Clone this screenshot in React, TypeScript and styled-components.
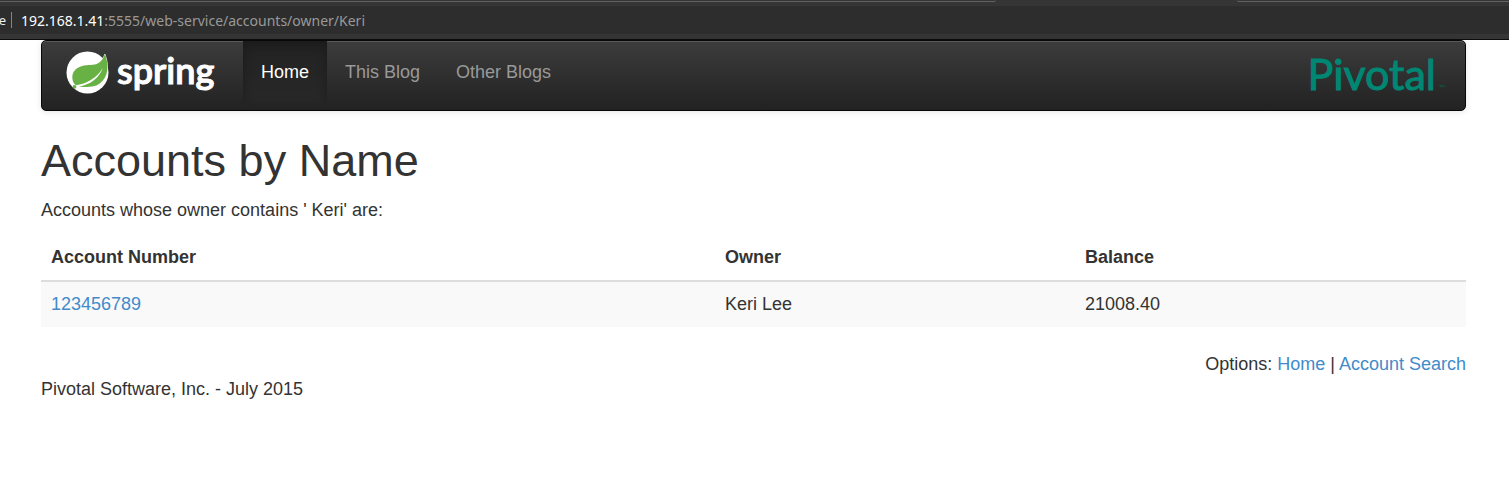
import React from "react";
import styled, { createGlobalStyle } from "styled-components";

const GlobalStyle = createGlobalStyle`
  *, *::before, *::after { box-sizing: border-box; }
  body {
    margin: 0;
    background: #fff;
    color: #333;
    font-family: "Liberation Sans", Arial, sans-serif;
    font-size: 18px;
    line-height: 25px;
  }
`;

const BrowserBar = styled.div`
  height: 40px;
  background: #353535;
  border-bottom: 1px solid #0c0c0c;
`;

const TabStrip = styled.div`
  display: grid;
  grid-template-columns: 66% 1fr 18%;
  height: 6px;
`;

const TabEdge = styled.span<{ $side: "left" | "right" }>`
  height: 2px;
  border-bottom: 1px solid #626262;
  border-radius: ${(p) => (p.$side === "left" ? "0 0 3px 0" : "0 0 0 3px")};
  grid-column: ${(p) => (p.$side === "left" ? 1 : 3)};
`;

const AddressRow = styled.div`
  display: flex;
  align-items: center;
  height: 28px;
  background: #2d2d2d;
  color: #999;
  font-family: "Noto Sans", sans-serif;
  font-size: 14px;
`;

const Identity = styled.span`
  display: flex;
  justify-content: flex-end;
  width: 12px;
  height: 16px;
  margin-right: 9px;
  padding-right: 5px;
  border-right: 1px solid #858585;
  font-size: 13px;
  line-height: 16px;
  color: #eee;
`;

const Host = styled.span`
  color: #fff;
`;

const Container = styled.div`
  padding: 0 43px 0 41px;
`;

const Navbar = styled.nav`
  display: flex;
  align-items: flex-start;
  height: 71px;
  margin-bottom: 25px;
  padding: 0 20px 0 24px;
  border: 1px solid #080808;
  border-radius: 5px;
  background: linear-gradient(to bottom, #3c3c3c 0%, #222 100%);
  box-shadow: inset 0 1px 0 rgba(255, 255, 255, 0.15), 0 1px 6px rgba(0, 0, 0, 0.1);
`;

const SpringLink = styled.a`
  display: flex;
  align-items: center;
  width: 177px;
  height: 62px;
  gap: 8px;
  color: #fff;
  text-decoration: none;
`;

const SpringWord = styled.span`
  font: 600 36px/40px Lato, sans-serif;
  padding-bottom: 4px;
  -webkit-text-stroke: 1px #fff;
`;

const NavList = styled.ul`
  display: flex;
  flex: 1;
  margin: 0;
  padding: 0;
  list-style: none;
`;

const NavLink = styled.a<{ $active?: boolean }>`
  display: block;
  height: 62px;
  padding: 19px 18px;
  line-height: 25px;
  text-decoration: none;
  color: ${(p) => (p.$active ? "#fff" : "#999")};
  background: ${(p) => (p.$active ? "linear-gradient(to bottom, #222 0%, #282828 100%)" : "transparent")};
  box-shadow: ${(p) => (p.$active ? "inset 0 4px 11px rgba(0, 0, 0, 0.25)" : "none")};
`;

const PivotalLink = styled.a`
  display: flex;
  align-items: flex-end;
  height: 58px;
  color: #008774;
  font: 400 43px/50px Lato, sans-serif;
  -webkit-text-stroke: 1px #008774;
  text-decoration: none;
`;

const Trademark = styled.small`
  margin-left: 3px;
  font-size: 8px;
  line-height: 22px;
  opacity: 0.5;
  -webkit-text-stroke: 0;
`;

const Title = styled.h1`
  margin: 0 0 12px;
  font-size: 45px;
  font-weight: 500;
  line-height: 50px;
`;

const Lead = styled.p`
  margin: 0 0 12px;
`;

const Accounts = styled.table`
  width: 100%;
  margin-bottom: 25px;
  border-collapse: separate;
  border-spacing: 0;
  table-layout: fixed;
`;

const HeadCell = styled.th<{ $share?: string }>`
  width: ${(p) => p.$share ?? "auto"};
  padding: 10px;
  border-bottom: 2px solid #ddd;
  text-align: left;
`;

const Cell = styled.td`
  padding: 10px;
  background: #f9f9f9;
`;

const TextLink = styled.a`
  color: #428bca;
  text-decoration: none;
`;

const Options = styled.div`
  text-align: right;
`;

const SpringLeaf = () => (
  <svg width="43" height="43" viewBox="0 0 43 43" aria-hidden="true">
    <circle cx="21.5" cy="21.5" r="21" fill="#fff" />
    <path
      d="M38.8 3.2 C37.8 6.5 36 9 34 11 C30 14.5 24 13.5 18 14.5 C10.5 16 6.5 20.5 6.3 26 C6.2 29.5 7.5 32.5 9.8 34.3 C20 33 30.5 27.5 36.8 17 C33 27.5 24 33.8 13 35.5 C20 36.4 28 36.5 33 33 C43 26 43 14 38.8 3.2 Z"
      fill="#68b245"
      stroke="#fff"
      strokeWidth="1"
      paintOrder="stroke"
    />
    <circle cx="8.5" cy="35.8" r="1.9" fill="#68b245" />
  </svg>
);

export default function App() {
  return (
    <>
      <GlobalStyle />
      <BrowserBar>
        <TabStrip>
          <TabEdge $side="left" />
          <TabEdge $side="right" />
        </TabStrip>
        <AddressRow>
          <Identity>e</Identity>
          <Host>192.168.1.41</Host>
          <span>:5555/web-service/accounts/owner/Keri</span>
        </AddressRow>
      </BrowserBar>
      <Container>
        <Navbar>
          <SpringLink href="#spring">
            <SpringLeaf />
            <SpringWord>spring</SpringWord>
          </SpringLink>
          <NavList>
            <li><NavLink href="#home" $active>Home</NavLink></li>
            <li><NavLink href="#this-blog">This Blog</NavLink></li>
            <li><NavLink href="#other-blogs">Other Blogs</NavLink></li>
          </NavList>
          <PivotalLink href="#pivotal">
            Pivotal<Trademark>™</Trademark>
          </PivotalLink>
        </Navbar>
        <main>
          <Title>Accounts by Name</Title>
          <Lead>Accounts whose owner contains ' Keri' are:</Lead>
          <Accounts>
            <thead>
              <tr>
                <HeadCell $share="47.3%">Account Number</HeadCell>
                <HeadCell $share="25.26%">Owner</HeadCell>
                <HeadCell>Balance</HeadCell>
              </tr>
            </thead>
            <tbody>
              <tr>
                <Cell><TextLink href="#123456789">123456789</TextLink></Cell>
                <Cell>Keri Lee</Cell>
                <Cell>21008.40</Cell>
              </tr>
            </tbody>
          </Accounts>
        </main>
        <Options>
          Options: <TextLink href="#home">Home</TextLink> | <TextLink href="#search">Account Search</TextLink>
        </Options>
        <footer>Pivotal Software, Inc. - July 2015</footer>
      </Container>
    </>
  );
}
